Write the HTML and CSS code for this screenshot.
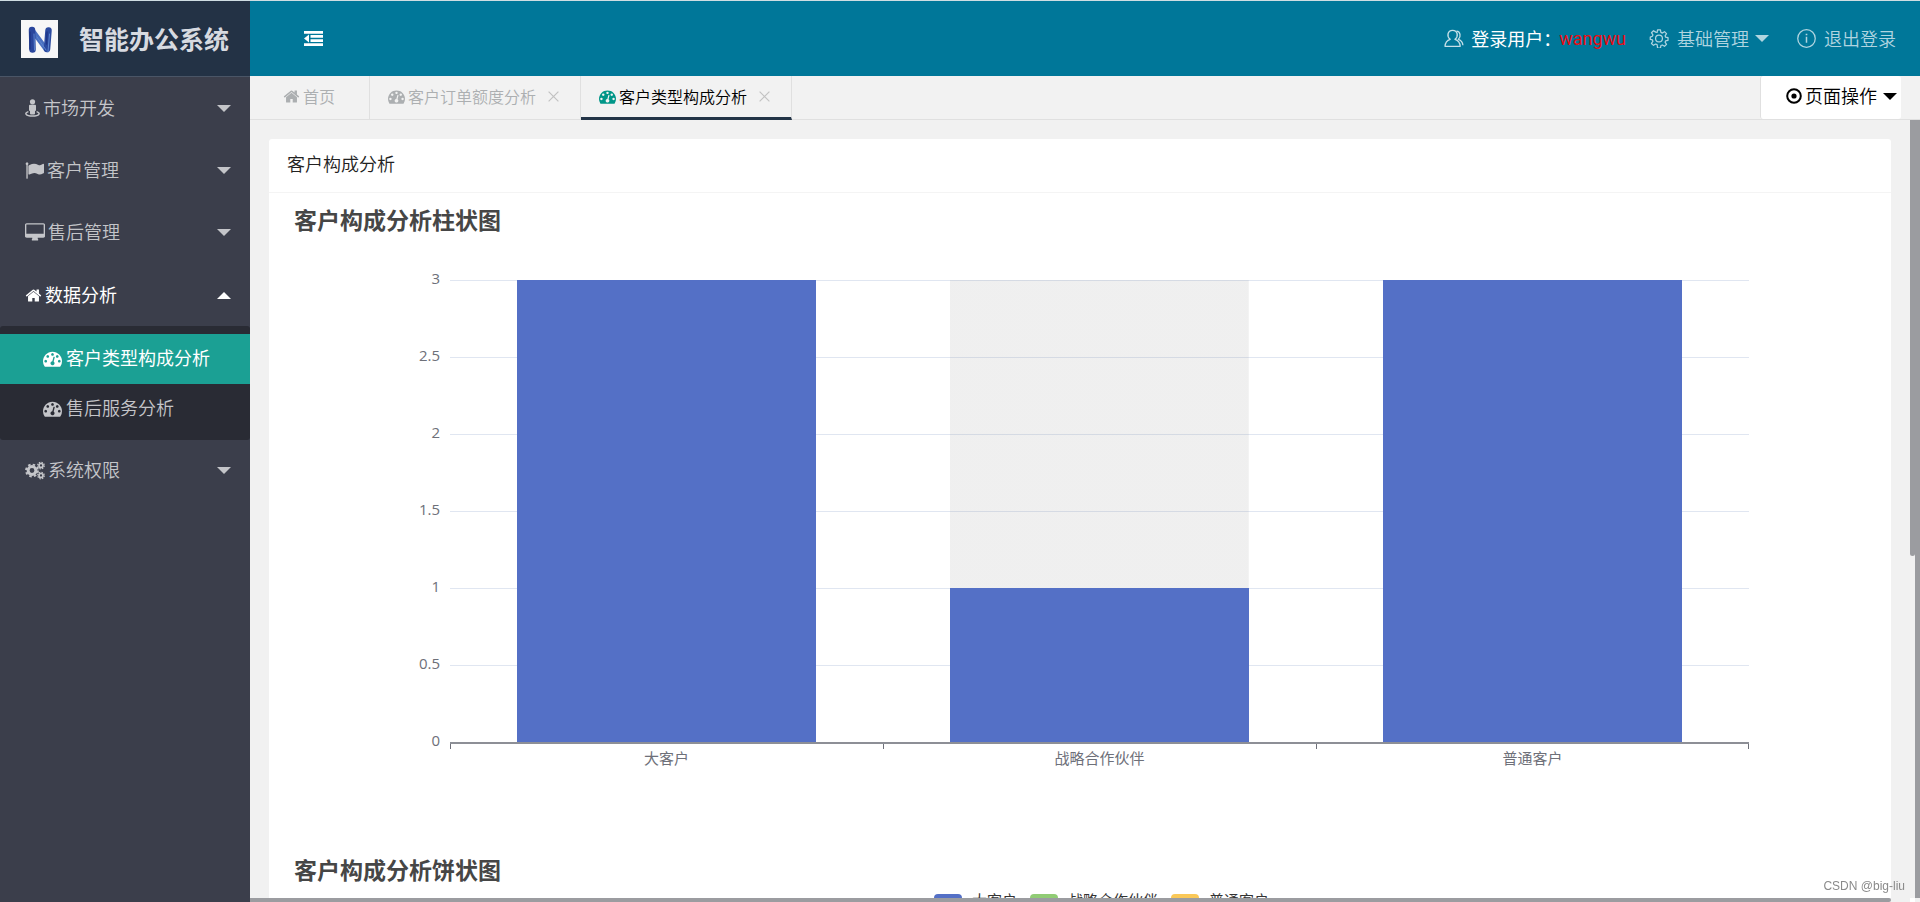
FILE: index.html
```html
<!DOCTYPE html>
<html lang="zh-CN">
<head>
<meta charset="utf-8">
<title>智能办公系统</title>
<link rel="stylesheet" href="styles.css">
</head>
<body>
<svg class="sprite" aria-hidden="true">
  <symbol id="home" viewBox="0 0 1792 1792"><path d="M1472 992v480q0 26-19 45t-45 19h-384v-384h-256v384h-384q-26 0-45-19t-19-45v-480q0-1 .5-3t.5-3l575-474 575 474q1 2 1 6zm223-69l-62 74q-8 9-21 11h-3q-13 0-21-7l-692-577-692 577q-12 8-24 7-13-2-21-11l-62-74q-8-10-7-23.5t11-21.5l719-599q32-26 76-26t76 26l244 204v-195q0-14 9-23t23-9h192q14 0 23 9t9 23v408l219 182q10 8 11 21.5t-7 23.5z"/></symbol>
  <symbol id="gauge" viewBox="0 0 1792 1792"><path d="M384 1152q0-53-37.5-90.5t-90.5-37.5-90.5 37.5-37.5 90.5 37.5 90.5 90.5 37.5 90.5-37.5 37.5-90.5zm192-448q0-53-37.5-90.5t-90.5-37.5-90.5 37.5-37.5 90.5 37.5 90.5 90.5 37.5 90.5-37.5 37.5-90.5zm428 481l101-382q6-26-7.5-48.5t-38.5-29.5-48 6.5-30 39.5l-101 382q-60 5-107 43.5t-63 98.5q-20 77 20 146t117 89 146-20 89-117q16-60-6-117t-72-91zm660-33q0-53-37.5-90.5t-90.5-37.5-90.5 37.5-37.5 90.5 37.5 90.5 90.5 37.5 90.5-37.5 37.5-90.5zm-640-640q0-53-37.5-90.5t-90.5-37.5-90.5 37.5-37.5 90.5 37.5 90.5 90.5 37.5 90.5-37.5 37.5-90.5zm448 192q0-53-37.5-90.5t-90.5-37.5-90.5 37.5-37.5 90.5 37.5 90.5 90.5 37.5 90.5-37.5 37.5-90.5zm320 448q0 261-141 483-19 29-54 29h-1402q-35 0-54-29-141-221-141-483 0-182 71-348t191-286 286-191 348-71 348 71 286 191 191 286 71 348z"/></symbol>
  <symbol id="flag" viewBox="0 0 1792 1792"><path d="M320 256q0 72-64 110v1266q0 13-9.5 22.5t-22.5 9.5h-64q-13 0-22.5-9.5t-9.5-22.5v-1266q-64-38-64-110 0-53 37.5-90.5t90.5-37.5 90.5 37.5 37.5 90.5zm1472 64v763q0 25-12.5 38.5t-39.5 27.5q-215 116-369 116-61 0-123.5-22t-108.5-48-115.5-48-142.5-22q-192 0-464 146-17 9-33 9-26 0-45-19t-19-45v-742q0-32 31-55 21-14 79-43 236-120 421-120 107 0 200 29t219 88q38 19 88 19 54 0 117.5-21t110-47 88-47 54.5-21q26 0 45 19t19 45z"/></symbol>
  <symbol id="desktop" viewBox="-64 0 1920 1792"><path d="M1728 992v-832q0-13-9.5-22.5t-22.5-9.5h-1600q-13 0-22.5 9.5t-9.5 22.5v832q0 13 9.5 22.5t22.5 9.5h1600q13 0 22.5-9.5t9.5-22.5zm128-832v1088q0 66-47 113t-113 47h-544q0 37 16 77.5t32 71 16 43.5q0 26-19 45t-45 19h-512q-26 0-45-19t-19-45q0-14 16-44t32-70 16-78h-544q-66 0-113-47t-47-113v-1088q0-66 47-113t113-47h1600q66 0 113 47t47 113z"/></symbol>
  <symbol id="street" viewBox="0 0 15 18"><circle cx="7.500" cy="2.800" r="2.600"/><path d="M5 5.800h5q1 0 1 1v4.400q0 .8-1 .8v2.500q0 1-1 1H6q-1 0-1-1V12q-1 0-1-.8V6.800q0-1 1-1z"/><path d="M3.400 12.600C-1 14 .5 17.100 7.500 17.100s8.500-3.100 4.100-4.500" fill="none" stroke="currentColor" stroke-width="1.500"/></symbol>
  <symbol id="cogs" viewBox="0 0 20 18"><g fill="none" stroke="currentColor"><circle cx="7" cy="9" r="3.900" stroke-width="3"/><circle cx="7" cy="9" r="6" stroke-width="1.800" stroke-dasharray="2.500 2.212"/><circle cx="16" cy="4" r="2" stroke-width="1.700"/><circle cx="16" cy="4" r="3.300" stroke-width="1.200" stroke-dasharray="1.500 1.092"/><circle cx="16" cy="14" r="2" stroke-width="1.700"/><circle cx="16" cy="14" r="3.300" stroke-width="1.200" stroke-dasharray="1.500 1.092"/></g></symbol>
  <symbol id="outdent" viewBox="0 0 19 15"><path d="M0 0h19v2.800H0zM6.500 4.100H19v2.700H6.500zM6.500 8.200H19v2.700H6.500zM0 12.200h19V15H0zM0 7.500l5-3.900v7.800z"/></symbol>
  <symbol id="user" viewBox="0 0 20 18"><g fill="none" stroke="currentColor" stroke-width="1.300" stroke-linejoin="round"><path d="M6.200 9.800C2.500 7 3.400.8 8.600.8s6.100 6.200 2.400 9c3.200 1 5 3.600 5.200 7H1c.2-3.400 2-6 5.200-7z"/><path d="M12.500 1.600c4 .2 4.700 5.600 1.900 8.200 2.800 1 4.300 3.200 4.500 6"/></g></symbol>
  <symbol id="gear" viewBox="0 0 20 20"><g fill="none" stroke="currentColor" stroke-width="1.300" stroke-linejoin="round"><circle cx="10" cy="10" r="3.600"/><path d="M8.500 1h3l.5 2.600 1.500.7 2.300-1.500 2.100 2.100-1.500 2.300.6 1.400 2.500.5v2.800l-2.500.5-.6 1.500 1.500 2.300-2.100 2-2.300-1.400-1.500.6-.5 2.600h-3L8 16.400l-1.500-.6-2.300 1.400-2.100-2 1.500-2.300-.6-1.500L.8 11V8.600L3 7.600l.6-1.400-1.500-2.300 2.100-2.100 2.300 1.500L8 3.600z"/></g></symbol>
  <symbol id="info" viewBox="0 0 18 18"><circle cx="9" cy="9" r="8.300" fill="none" stroke="currentColor" stroke-width="1.200"/><path d="M8.300 7.300h1.400V13H8.300zM8.200 4.500h1.600V6H8.200z"/></symbol>
  <symbol id="target" viewBox="0 0 16 16"><circle cx="8" cy="8" r="6.800" fill="none" stroke="currentColor" stroke-width="2"/><circle cx="8" cy="8" r="2.600"/></symbol>
  <symbol id="close" viewBox="0 0 11 11"><path d="M.6.6l9.800 9.800M10.400.6L.6 10.400" fill="none" stroke="currentColor" stroke-width="1.200"/></symbol>
</svg>

<aside class="sidebar">
  <div class="brand">
    <svg class="brand-logo" viewBox="0 0 37 38" aria-hidden="true">
      <rect width="37" height="38" fill="#f7f7f7"/>
      <g fill="none" stroke-linecap="round" stroke-linejoin="round">
        <path d="M11 10l14 19" stroke="#4a70c0" stroke-width="5"/>
        <path d="M11 10L11.500 29.500" stroke="#2a469c" stroke-width="6.500"/>
        <path d="M27.500 10.500L26 29" stroke="#2b4a9f" stroke-width="6.500"/>
        <path d="M13 14l.5 16M28.500 14l-1.500 18M16 17l9 13" stroke="#5d86cf" stroke-width="1"/>
        <path d="M9 12v17M26 12l-.5 12" stroke="#1f3787" stroke-width="1.500"/>
      </g>
    </svg>
    <h1 class="brand-name">智能办公系统</h1>
  </div>
  <nav class="menu">
    <button class="menu-item" type="button"><svg class="icon icon-street"><use href="#street"/></svg><span>市场开发</span><i class="caret"></i></button>
    <button class="menu-item" type="button"><svg class="icon icon-md"><use href="#flag"/></svg><span>客户管理</span><i class="caret"></i></button>
    <button class="menu-item" type="button"><svg class="icon icon-lg"><use href="#desktop"/></svg><span>售后管理</span><i class="caret"></i></button>
    <button class="menu-item is-open" type="button"><svg class="icon icon-sm"><use href="#home"/></svg><span>数据分析</span><i class="caret caret-up"></i></button>
    <div class="submenu">
      <a class="submenu-item is-active" href="#type"><svg class="icon icon-md"><use href="#gauge"/></svg>客户类型构成分析</a>
      <a class="submenu-item" href="#service"><svg class="icon icon-md"><use href="#gauge"/></svg>售后服务分析</a>
    </div>
    <button class="menu-item" type="button"><svg class="icon icon-lg"><use href="#cogs"/></svg><span>系统权限</span><i class="caret"></i></button>
  </nav>
</aside>

<div class="main">
  <header class="topbar">
    <button class="collapse" type="button" aria-label="收起菜单"><svg class="icon-outdent"><use href="#outdent"/></svg></button>
    <div class="account">
      <a class="account-user" href="#user"><svg class="icon icon-lg"><use href="#user"/></svg><span>登录用户：</span><span class="user-name">wangwu</span></a>
      <button class="account-item" type="button"><svg class="icon icon-lg"><use href="#gear"/></svg><span>基础管理</span><i class="caret"></i></button>
      <a class="account-item" href="#logout"><svg class="icon icon-md"><use href="#info"/></svg><span>退出登录</span></a>
    </div>
  </header>

  <div class="tabbar">
    <div class="tab tab-home"><a href="#home-page"><svg class="icon icon-tab"><use href="#home"/></svg>首页</a></div>
    <div class="tab"><a href="#order"><svg class="icon icon-tab"><use href="#gauge"/></svg>客户订单额度分析</a><button class="tab-close" type="button" aria-label="关闭"><svg><use href="#close"/></svg></button></div>
    <div class="tab is-current"><a href="#type"><svg class="icon icon-tab"><use href="#gauge"/></svg>客户类型构成分析</a><button class="tab-close" type="button" aria-label="关闭"><svg><use href="#close"/></svg></button></div>
    <button class="page-ops" type="button"><svg class="icon icon-target"><use href="#target"/></svg><span>页面操作</span><i class="caret"></i></button>
  </div>

  <div class="viewport">
    <main class="content">
      <section class="card">
        <h2 class="card-title">客户构成分析</h2>
        <div class="chart chart-bar">
          <h3 class="chart-title">客户构成分析柱状图</h3>
          <div class="plot">
            <div class="scale"><span>3</span><span>2.5</span><span>2</span><span>1.5</span><span>1</span><span>0.5</span><span>0</span></div>
            <div class="grid"><i></i><i></i><i></i><i></i><i></i><i></i></div>
            <div class="bars">
              <div class="slot"><div class="bar" style="height:100%"></div></div>
              <div class="slot is-hover"><div class="bar" style="height:33.33%"></div></div>
              <div class="slot"><div class="bar" style="height:100%"></div></div>
            </div>
            <div class="categories"><span>大客户</span><span>战略合作伙伴</span><span>普通客户</span></div>
          </div>
        </div>
        <div class="chart">
          <h3 class="chart-title">客户构成分析饼状图</h3>
          <div class="legend">
            <span><i class="swatch blue"></i>大客户</span>
            <span><i class="swatch green"></i>战略合作伙伴</span>
            <span><i class="swatch yellow"></i>普通客户</span>
          </div>
        </div>
      </section>
    </main>
    <div class="scroll-inner"></div>
    <div class="scroll-outer"></div>
    <div class="scroll-x"></div>
    <div class="scroll-corner"></div>
  </div>
</div>
<div class="watermark">CSDN @big-liu</div>
</body>
</html>
```
FILE: styles.css
```css
* { box-sizing: border-box; }

body {
  margin: 0;
  height: 100vh;
  display: flex;
  overflow: hidden;
  border-top: 1px solid #cfdde2;
  background: #f1f1f1;
  color: #333;
  font: 350 18px/24px "Open Sans", "Noto Sans CJK SC", sans-serif;
}

button {
  margin: 0;
  padding: 0;
  border: 0;
  background: none;
  color: inherit;
  font: inherit;
  cursor: pointer;
}

a { color: inherit; text-decoration: none; }

h1, h2, h3 { margin: 0; }

.sprite { position: absolute; width: 0; height: 0; }

.icon { flex: none; fill: currentColor; }
.icon-street { width: 15px; height: 18px; }
.icon-sm { width: 17px; height: 17px; }
.icon-md { width: 19px; height: 19px; }
.icon-lg { width: 20px; height: 19px; }
.icon-tab { width: 17px; height: 17px; }
.icon-target { width: 16px; height: 16px; }

.caret {
  flex: none;
  border: 7px solid transparent;
  border-top-color: currentColor;
  border-bottom: 0;
}
.caret-up {
  border-top: 0;
  border-bottom: 7px solid currentColor;
}

/* Sidebar */
.sidebar {
  flex: none;
  width: 250px;
  background: #3b3e4b;
  color: #c4c5c9;
}

.brand {
  display: flex;
  align-items: center;
  gap: 21px;
  height: 76px;
  padding: 1px 0 0 21px;
  border-bottom: 1px solid #4a5566;
  background: #233245;
}
.brand-logo { width: 37px; height: 38px; }
.brand-name { color: #d7dae0; font-size: 25px; line-height: 36px; }

.menu { display: flex; flex-direction: column; padding-top: 1px; }

.menu-item {
  display: flex;
  align-items: center;
  gap: 3px;
  height: 62px;
  padding: 0 19px 2px 25px;
}
.menu-item .caret { margin-left: auto; }
.menu-item.is-open { padding-bottom: 0; color: #fff; font-weight: 400; }

.submenu {
  padding: 8px 0 6px;
  border-radius: 3px;
  background: #292b34;
}
.submenu-item {
  display: flex;
  align-items: center;
  gap: 4px;
  height: 50px;
  padding: 0 0 2px 43px;
}
.submenu-item.is-active { background: #1ba094; color: #fff; font-weight: 400; }

/* Top bar */
.main {
  flex: 1;
  min-width: 0;
  display: flex;
  flex-direction: column;
}

.topbar {
  flex: none;
  display: flex;
  align-items: center;
  justify-content: space-between;
  height: 75px;
  padding: 0 24px 0 54px;
  background: #007799;
  color: #b0d5e0;
}
.collapse { display: flex; color: #fff; }
.icon-outdent { width: 19px; height: 15px; fill: currentColor; }

.account { display: flex; align-items: center; gap: 25px; }
.account-user, .account-item { display: flex; align-items: center; gap: 8px; }
.account-item .caret { margin: 0 3px 0 -2px; }
.account-user { gap: 7px; margin-right: -2px; color: #fff; font-weight: 400; }
.account-user .icon { color: #c5e0e8; }
.user-name { margin-left: -9px; color: #ea0b13; font-family: Roboto, sans-serif; }

/* Tabs */
.tabbar {
  flex: none;
  display: flex;
  height: 44px;
  padding-right: 19px;
  border-bottom: 1px solid #e0e0e0;
  background: #f2f2f2;
}

.tab {
  display: flex;
  align-items: center;
  gap: 12px;
  padding: 0 21px 2px 18px;
  border-right: 1px solid #e0e0e0;
  color: #acafb1;
  font-size: 16px;
}
.tab a { display: flex; align-items: center; gap: 3px; }
.tab-home { padding-right: 34px; padding-left: 33px; }
.tab-close { display: flex; color: #c2c2c2; }
.tab-close svg { width: 11px; height: 11px; }
.tab.is-current {
  height: 44px;
  padding-bottom: 0;
  border-bottom: 3px solid #233447;
  color: #000;
}
.tab.is-current .icon { color: #009688; }

.page-ops {
  display: flex;
  align-items: center;
  gap: 3px;
  margin-left: auto;
  padding: 0 4px 3px 25px;
  border-left: 1px solid #e0e0e0;
  border-radius: 3px;
  background: #fff;
  color: #000;
}
.page-ops .caret { margin-left: 3px; }

/* Scrolled page */
.viewport {
  flex: 1;
  min-height: 0;
  display: grid;
  grid-template: minmax(0, 1fr) 4px / minmax(0, 1fr) 5px 5px;
}
.content { padding: 19px 19px 0; overflow: hidden; }
.scroll-inner { height: 56%; border-radius: 0 0 3px 3px; background: #9b9ca0; }
.scroll-outer { background: #9b9ca0; }
.scroll-x { margin-right: 19px; border-radius: 0 2px 2px 0; background: #9b9ca0; }
.scroll-corner { background: #fff; }

.card { border-radius: 3px; background: #fff; }
.card-title {
  padding: 13px 18px 16px;
  border-bottom: 1px solid #f4f4f4;
  color: #222;
  font-size: 18px;
  font-weight: 350;
}

.chart { padding: 12px 142px 0 25px; }
.chart-bar { height: 650px; }
.chart-title { color: #464646; font-size: 23px; line-height: 30px; }

.plot {
  display: grid;
  grid-template: 462px auto / 146px 1fr;
  column-gap: 10px;
  margin-top: 45px;
  color: #6e7079;
  font-size: 15px;
  font-weight: 400;
  line-height: 20px;
}
.scale {
  display: flex;
  flex-direction: column;
  justify-content: space-between;
  margin: -12px 0 -8px;
  text-align: right;
}
.grid, .bars { grid-area: 1 / 2; display: flex; }
.grid { flex-direction: column; }
.grid i { flex: 1; border-top: 1px solid #e0e6f1; }
.slot {
  flex: 1;
  display: flex;
  justify-content: center;
  align-items: flex-end;
}
.bar { width: 69%; background: #5470c6; }
.is-hover {
  background: linear-gradient(rgba(150, 150, 150, 0.15), rgba(150, 150, 150, 0.15)) center / 69% 100% no-repeat;
}
.categories {
  grid-area: 2 / 2;
  display: flex;
  border-top: 2px solid #8d8f96;
  text-align: center;
}
.categories span {
  flex: 1;
  padding-top: 4px;
  background: linear-gradient(#6e7079, #6e7079) left top / 1px 5px no-repeat;
}
.categories span:last-child {
  background:
    linear-gradient(#6e7079, #6e7079) left top / 1px 5px no-repeat,
    linear-gradient(#6e7079, #6e7079) right top / 1px 5px no-repeat;
}

.legend {
  display: flex;
  justify-content: center;
  gap: 13px;
  margin: 3px 0 0 160px;
  font-size: 15px;
  font-weight: 400;
  line-height: 20px;
}
.legend span { display: flex; align-items: center; gap: 10px; }
.swatch { width: 28px; height: 18px; margin-top: 6px; border-radius: 4px; }
.blue { background: #5470c6; }
.green { background: #91cc75; }
.yellow { background: #fac858; }

.watermark {
  position: fixed;
  right: 15px;
  bottom: 6px;
  color: #8a8a8a;
  font: 12px/20px "Liberation Sans", sans-serif;
}
```
